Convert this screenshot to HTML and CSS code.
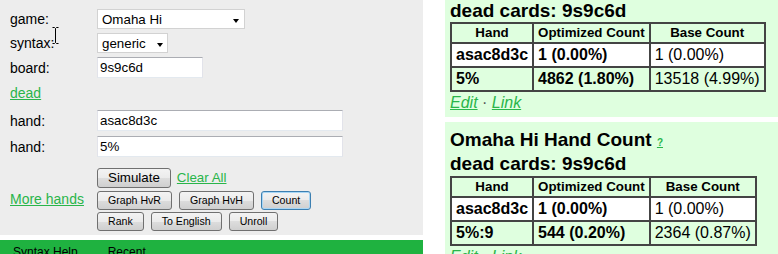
FILE: index.html
```html
<!DOCTYPE html>
<html lang="en">
<head>
  <meta charset="UTF-8" />
  <title>Hand Count</title>
  <link rel="stylesheet" href="styles.css">
</head>
<body>
  <div class="page">
    <div class="left">
      <form class="form">
        <label>game:</label>
        <span class="pick wide">
          <select>
            <option>Omaha Hi</option>
            <option>Omaha Hi/Lo</option>
            <option>Hold'em</option>
          </select>
        </span>

        <label>syntax:</label>
        <span class="pick narrow">
          <select>
            <option>generic</option>
            <option>ppt</option>
          </select>
        </span>

        <label>board:</label>
        <input class="text short" type="text" value="9s9c6d">

        <a class="link dead" href="#">dead</a>

        <label>hand:</label>
        <input class="text long" type="text" value="asac8d3c">

        <label>hand:</label>
        <input class="text long" type="text" value="5%">

        <a class="link more" href="#">More hands</a>
        <div class="buttons">
          <div class="brow">
            <button type="button" class="btn big">Simulate</button>
            <a class="link clear" href="#">Clear All</a>
          </div>
          <div class="brow second">
            <button type="button" class="btn">Graph HvR</button>
            <button type="button" class="btn">Graph HvH</button>
            <button type="button" class="btn focus">Count</button>
          </div>
          <div class="brow third">
            <button type="button" class="btn">Rank</button>
            <button type="button" class="btn">To English</button>
            <button type="button" class="btn">Unroll</button>
          </div>
        </div>
      </form>

      <div class="menu">
        <span>Syntax Help</span>
        <span>Recent</span>
      </div>

      <!-- mouse pointer caught in the screenshot -->
      <svg class="cursor" width="9" height="17" viewBox="0 0 9 17">
        <path d="M1.5 .5h2l1 1 1-1h2M4.5 1.5v14M1.5 16.5h2l1-1 1 1h2" fill="none" stroke="#000" stroke-width="1"/>
      </svg>
    </div>

    <div class="results">
      <div class="panel first">
        <h3>dead cards: 9s9c6d</h3>
        <table class="counts">
          <tr><th>Hand</th><th>Optimized Count</th><th>Base Count</th></tr>
          <tr class="odd"><td class="b">asac8d3c</td><td class="b">1 (0.00%)</td><td>1 (0.00%)</td></tr>
          <tr><td class="b">5%</td><td class="b">4862 (1.80%)</td><td>13518 (4.99%)</td></tr>
        </table>
        <div class="links"><a href="#">Edit</a> <span class="sep">·</span> <a href="#">Link</a></div>
      </div>

      <div class="panel">
        <h3>Omaha Hi Hand Count <a class="help" href="#">?</a></h3>
        <h3>dead cards: 9s9c6d</h3>
        <table class="counts">
          <tr><th>Hand</th><th>Optimized Count</th><th>Base Count</th></tr>
          <tr class="odd"><td class="b">asac8d3c</td><td class="b">1 (0.00%)</td><td>1 (0.00%)</td></tr>
          <tr><td class="b">5%:9</td><td class="b">544 (0.20%)</td><td>2364 (0.87%)</td></tr>
        </table>
        <div class="links"><a href="#">Edit</a> <span class="sep">·</span> <a href="#">Link</a></div>
      </div>
    </div>
  </div>
</body>
</html>
```

FILE: styles.css
```css
* {
  box-sizing: border-box;
}

body {
  margin: 0;
  background: #fff;
  color: #000;
  font-family: "Liberation Sans", Arial, sans-serif;
  overflow: hidden;
}

.page {
  display: flex;
  align-items: flex-start;
  width: 820px;
}

.left {
  position: relative;
  width: 423px;
  flex: none;
}

.form {
  margin: 0;
  height: 235px;
  padding: 7px 0 0 10px;
  background: #ededed;
  display: grid;
  grid-template-columns: 87px auto;
  grid-template-rows: 24px 24px 25px 26px 29px 23px auto;
  align-items: center;
  font-size: 14px;
}

.form > * {
  justify-self: start;
}

.link {
  color: #29b54a;
  text-decoration: underline;
}

.dead {
  grid-column: 1 / -1;
}

.more,
.buttons {
  margin-top: 5px;
}

.text {
  height: 21px;
  margin: 0;
  padding: 0 2px;
  border: 1px solid #e2e3ea;
  border-top-color: #abadb3;
  border-bottom-color: #e3e9ef;
  background: #fff;
  font: 13.33px "Liberation Sans", Arial, sans-serif;
  color: #000;
}

.text.short {
  width: 106px;
}

.text.long {
  width: 246px;
}

.pick {
  position: relative;
  display: inline-block;
}

.pick select {
  appearance: none;
  display: block;
  height: 20px;
  margin: 0;
  padding: 0 0 0 4px;
  border: 1px solid #d2d2d2;
  border-radius: 0;
  background: #fff;
  font: 13.33px "Liberation Sans", Arial, sans-serif;
  color: #000;
}

.pick::after {
  content: "";
  position: absolute;
  top: 10px;
  right: 6px;
  border-left: 3.5px solid transparent;
  border-right: 3.5px solid transparent;
  border-top: 4px solid #000;
}

.pick.wide select {
  width: 148px;
}

.pick.narrow select {
  width: 71px;
}

.pick.narrow::after {
  right: 5px;
}

.brow {
  display: flex;
  align-items: baseline;
  gap: 7px;
}

.brow.second {
  margin-top: 3px;
}

.brow.third {
  margin-top: 2px;
}

.clear {
  margin-left: -1px;
  font-size: 13.33px;
}

.btn {
  height: 19px;
  margin: 0;
  padding: 0 10px;
  border: 1px solid #707070;
  border-radius: 3px;
  background: linear-gradient(#f3f3f3, #ebebeb 50%, #dddddd 50%, #cfcfcf);
  font: 10.6px "Liberation Sans", Arial, sans-serif;
  color: #000;
}

.btn.big {
  height: 20px;
  font-size: 13.33px;
}

.btn.focus {
  border-color: #3c7fb1;
  box-shadow: inset 0 0 0 1px #a8d6f5;
}

.menu {
  margin-top: 5px;
  height: 30px;
  padding: 5px 0 0 13px;
  background: #1fb240;
  display: flex;
  gap: 30px;
  font-size: 12px;
  line-height: 14px;
}

.cursor {
  position: absolute;
  left: 51px;
  top: 27px;
}

.results {
  margin-left: 22px;
  width: 360px;
  flex: none;
}

.panel {
  background: #dfffdf;
  padding: 0 5px 3px;
}

.panel + .panel {
  margin-top: 5px;
  padding-top: 6px;
}

h3 {
  margin: 0;
  font-size: 19px;
  line-height: 24px;
  font-weight: bold;
}

.first h3 {
  line-height: 22px;
}

.help {
  color: #29b54a;
  font-size: 10px;
  line-height: 1;
}

.counts {
  border-collapse: separate;
  border-spacing: 0;
  border: 1px solid #444;
}

.counts th,
.counts td {
  border: 1px solid #444;
  white-space: nowrap;
}

.counts th {
  padding: 1px 4px;
  font-size: 13.33px;
  line-height: 16px;
}

.counts td {
  padding: 2px 4px;
  font-size: 16px;
  line-height: 18px;
  text-align: left;
}

.counts td.b {
  font-weight: bold;
}

.counts tr.odd td {
  background: #fff;
}

.links {
  font-size: 16px;
  line-height: 22px;
}

.links a {
  color: #29b54a;
  font-style: italic;
}

.links .sep {
  color: #555;
}
```
